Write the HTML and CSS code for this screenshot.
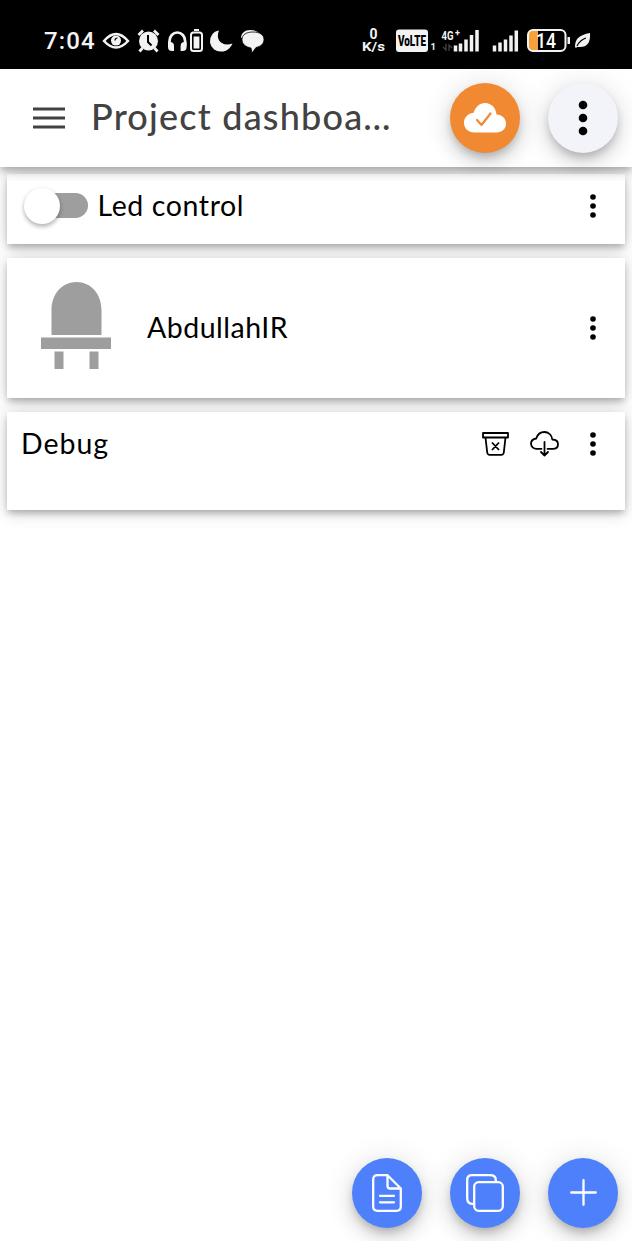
FILE: index.html
```
<!DOCTYPE html>
<html lang="en">
<head>
<meta charset="utf-8">
<title>Project dashboard</title>
<link rel="stylesheet" href="styles.css">
</head>
<body>
<div class="status">
  <span class="clock">7:04</span>
  <svg class="status-left" width="164" height="30" viewBox="102 26 164 30">
    <path d="M104 41Q116 27 128 41Q116 54 104 41Z" fill="none" stroke="#f3f3f3" stroke-width="2.5"/>
    <circle cx="116" cy="40.600" r="5" fill="#f3f3f3"/><path d="M115 40.500q0-2.500 2.500-2.500" fill="none" stroke="#000" stroke-width="1.200"/>
    <circle cx="148.500" cy="41" r="9.500" fill="#f3f3f3"/>
    <path d="M138.500 35l4.500-4.500M158.500 35l-4.500-4.500M142.500 48l-3 3.500M154.500 48l3 3.500" stroke="#f3f3f3" stroke-width="2.800"/>
    <path d="M148 35v7l3.500 3.500" fill="none" stroke="#000" stroke-width="2"/>
    <path d="M169.500 46v-5a7.800 8.500 0 0 1 15.600 0v5" fill="none" stroke="#f3f3f3" stroke-width="2.700"/>
    <path d="M168 42h2q4 0 4 4v5h-2q-4 0-4-4zM186.600 42h-2q-4 0-4 4v5h2q4 0 4-4z" fill="#f3f3f3"/>
    <rect x="191" y="32.500" width="11" height="18.500" rx="2.500" fill="none" stroke="#f3f3f3" stroke-width="2"/>
    <path d="M194 29h5v2h-5zM193.600 36.500h5.800v12h-5.800z" fill="#f3f3f3"/>
    <path d="M219 30.500C215 40 222 47 232.500 43.500C230 49 226 51.500 222 51.500A10.500 10.500 0 0 1 219 30.500Z" fill="#f3f3f3"/>
    <path d="M241 38c0-5 4-8 9-8 4 0 7 1 9 3z" fill="#f3f3f3"/>
    <path d="M253 32c7 0 11 3 11 7.500 0 4-3 7-8 8L252 53l-1-5c-5-1-9-3.500-9-8.500 0-4.500 4-7.500 11-7.500z" fill="#f3f3f3" stroke="#000" stroke-width=".8"/>
  </svg>
  <svg class="status-right" width="232" height="32" viewBox="360 25 232 32">
    <g class="status-text">
      <text x="369.500" y="39" font-size="14" textLength="8" lengthAdjust="spacingAndGlyphs">0</text>
      <text x="362" y="51" font-size="12" textLength="23" lengthAdjust="spacingAndGlyphs">K/s</text>
    </g>
    <rect x="396" y="29.500" width="32" height="22.500" rx="3" fill="#f3f3f3"/>
    <text class="volte" x="398" y="46" font-size="14" textLength="28" lengthAdjust="spacingAndGlyphs">VoLTE</text>
    <g class="status-text">
      <text x="430.500" y="50" font-size="9.500">1</text>
      <text x="441.500" y="40" font-size="13.500" textLength="12" lengthAdjust="spacingAndGlyphs">4G</text>
      <text x="455" y="35.500" font-size="9">+</text>
    </g>
    <path d="M446 44v6l-3-3M449 51v-6l3 3" fill="none" stroke="#444" stroke-width="1.300"/>
    <path d="M455.500 51.500v-6M460.500 51.500v-8M466 51.500v-12M471.500 51.500v-16.500M477 51.500v-21.500M494.500 51.500v-6M500 51.500v-9M505.500 51.500v-12M511 51.500v-16M516.300 51.500v-21" stroke="#f3f3f3" stroke-width="3.500"/>
    <path d="M538 30h-5q-5 0-5 5v11q0 5 5 5h5z" fill="#f5a13c"/>
    <rect x="528" y="30" width="37.500" height="21" rx="5" fill="none" stroke="#f3f3f3" stroke-width="2"/>
    <text class="battery" x="536" y="47.500" font-size="20" textLength="20" lengthAdjust="spacingAndGlyphs">14</text>
    <path d="M567.500 37h2.500v7h-2.500zM590 33q1 14-10 14h-3l-1 1-1-1c0-8 4-12 15-14z" fill="#f3f3f3"/>
    <path d="M577 46q3-6 9-8" fill="none" stroke="#000" stroke-width="1.300"/>
  </svg>
</div>

<header class="toolbar">
  <svg class="menu" width="32" height="22" viewBox="0 0 32 22"><path d="M0 2h32M0 11h32M0 20h32" stroke="#424242" stroke-width="3.200"/></svg>
  <h1 class="title">Project dashboa…</h1>
  <button class="fab orange" aria-label="Cloud status">
    <svg width="42" height="30" viewBox="0 0 42 30"><path d="M10.500 29.500C4 29.500 0 25 0 19.700C0 14.500 4 10.500 9.500 9.800C11.500 4 15.500 0 21 0C27.500 0 32 5 32.500 11.500C38 11.800 42 15.500 42 20.500C42 26 38 29.500 32.500 29.500Z" fill="#fff"/><path d="M13 17l4.500 5L26.500 10.500" fill="none" stroke="#f18832" stroke-width="2.200" stroke-linecap="round" stroke-linejoin="round"/></svg>
  </button>
  <button class="fab light" aria-label="More">
    <svg width="10" height="36" viewBox="0 0 10 36"><circle cx="5" cy="5" r="4.300"/><circle cx="5" cy="18" r="4.300"/><circle cx="5" cy="31" r="4.300"/></svg>
  </button>
</header>

<main class="cards">
  <section class="card control">
    <span class="toggle"><span class="knob"></span></span>
    <span class="label led-label">Led control</span>
    <svg class="dots" width="6" height="24" viewBox="0 0 6 24"><circle cx="3" cy="3" r="2.800"/><circle cx="3" cy="12" r="2.800"/><circle cx="3" cy="21" r="2.800"/></svg>
  </section>
  <section class="card lamp">
    <svg class="led" width="70" height="87" viewBox="0 0 70 87"><path d="M10.500 53V28C10.500 12 21 0 35.500 0S60.500 12 60.500 28V53ZM0 55.500H70V67H0ZM13.500 69.500H22.500V87H13.500ZM48.500 69.500H57.500V87H48.500Z" fill="#9e9e9e"/></svg>
    <span class="label name-label">AbdullahIR</span>
    <svg class="dots" width="6" height="24" viewBox="0 0 6 24"><circle cx="3" cy="3" r="2.800"/><circle cx="3" cy="12" r="2.800"/><circle cx="3" cy="21" r="2.800"/></svg>
  </section>
  <section class="card debug">
    <span class="label debug-label">Debug</span>
    <svg class="bin" width="27" height="24" viewBox="0 0 27 24" fill="none" stroke="#000" stroke-width="1.800" stroke-linejoin="round"><path d="M1 1h25v4.500H1zM3.500 5.500l1.700 15q.3 2.300 2.500 2.300h11.600q2.200 0 2.500-2.300l1.700-15M10 10.500l7 7.500M17 10.500L10 18"/></svg>
    <svg class="cloud" width="29" height="26" viewBox="0 0 29 26" fill="none" stroke="#000" stroke-width="1.800" stroke-linecap="round" stroke-linejoin="round"><path d="M11.500 17.800H6.500C3.500 17.800 1 15.500 1 12.800C1 9.800 3 8 6.200 7.500C7.500 3.500 10.500 1 14.300 1C18.500 1 21.800 4 22.300 8.500C25.800 8.700 28 10.500 28 13.200C28 16 26 17.800 22.800 17.800H17.500M14.500 11v13.500M11 21l3.500 3.500L18 21"/></svg>
    <svg class="dots" width="6" height="24" viewBox="0 0 6 24"><circle cx="3" cy="3" r="2.800"/><circle cx="3" cy="12" r="2.800"/><circle cx="3" cy="21" r="2.800"/></svg>
  </section>
</main>

<footer class="actions">
  <button class="fab blue" aria-label="Document">
    <svg width="30" height="38" viewBox="0 0 30 38" fill="none" stroke="#fff" stroke-width="2.300" stroke-linecap="round" stroke-linejoin="round"><path d="M15.500 1.200H5.500Q1.200 1.200 1.200 5.500V32.500Q1.200 36.800 5.500 36.800H24.500Q28.800 36.800 28.800 32.500V14.500ZM15.500 1.200V12Q15.500 14.500 18 14.500H28.800M8 21.800H22M8 28.300H22"/></svg>
  </button>
  <button class="fab blue" aria-label="Copy">
    <svg width="38" height="38" viewBox="0 0 38 38" fill="none" stroke="#fff" stroke-width="2.300"><rect x="8.200" y="8.200" width="28.600" height="28.600" rx="4.500"/><path d="M8.200 29.800H6Q1.200 29.800 1.200 24V6Q1.200 1.200 6 1.200H24Q29.800 1.200 29.800 6V8.200"/></svg>
  </button>
  <button class="fab blue" aria-label="Add">
    <svg width="27" height="27" viewBox="0 0 27 27" stroke="#fff" stroke-width="2.300" stroke-linecap="round"><path d="M13.500 1.200V25.800M1.200 13.500H25.800"/></svg>
  </button>
</footer>
</body>
</html>
```

FILE: styles.css
```
* { box-sizing: border-box; }
body {
  margin: 0;
  width: 632px;
  height: 1246px;
  display: flex;
  flex-direction: column;
  overflow: hidden;
  background: #fff;
  color: #000;
  font-family: Lato, sans-serif;
}
svg { display: block; flex: none; }
.status {
  flex: none;
  height: 69px;
  display: flex;
  align-items: center;
  padding: 13px 40px 0 44px;
  background: #000;
  color: #f3f3f3;
}
.clock {
  width: 58px;
  font: 500 24px/30px Roboto, sans-serif;
  letter-spacing: 1.1px;
  white-space: nowrap;
}
.status-right { margin-left: auto; }
.status-text { fill: #f3f3f3; font-family: Roboto, sans-serif; font-weight: 700; }
.volte { fill: #000; font-family: Roboto, sans-serif; font-weight: 900; }
.battery { fill: #fff; font-family: Roboto, sans-serif; font-weight: 500; }
.toolbar {
  position: relative;
  z-index: 1;
  flex: none;
  height: 98px;
  display: flex;
  align-items: center;
  padding: 0 14px 0 33px;
  background: #fff;
  box-shadow: 0 4px 7px rgba(0,0,0,.26), 0 2px 20px rgba(0,0,0,.14);
  clip-path: inset(0 0 -14px 0);
}
.title {
  width: 325px;
  margin: 0 0 4px 26px;
  font-size: 36px;
  line-height: 48px;
  font-weight: 500;
  letter-spacing: 1.2px;
  color: #424242;
  white-space: nowrap;
}
.fab {
  flex: none;
  width: 70px;
  height: 70px;
  padding: 0;
  border: 0;
  border-radius: 50%;
  display: flex;
  align-items: center;
  justify-content: center;
  box-shadow: 0 5px 9px -2px rgba(0,0,0,.2), 0 10px 17px rgba(0,0,0,.12), 0 2px 31px rgba(0,0,0,.12);
}
.orange { background: #f18832; margin-right: 28px; }
.title + .orange { margin-left: auto; }
.light { background: #f3f4f9; }
.blue { background: #4d80fa; }
.cards {
  flex: 1;
  display: flex;
  flex-direction: column;
  gap: 14px;
  padding: 7px;
}
.card {
  flex: none;
  display: flex;
  background: #fff;
  box-shadow: 0 4px 7px -1px rgba(0,0,0,.28), 0 2px 18px rgba(0,0,0,.16);
}
.label { font-size: 28.5px; line-height: 36px; padding-bottom: 2px; white-space: nowrap; }
.dots { margin-left: auto; }
.control { height: 70px; padding: 0 29px 7px 17px; align-items: center; }
.toggle {
  width: 64px;
  height: 36px;
  display: flex;
  align-items: center;
}
.toggle::after {
  content: "";
  flex: none;
  width: 45px;
  height: 25px;
  margin-left: -17px;
  background: #9e9e9e;
  border-radius: 13px;
}
.knob {
  position: relative;
  z-index: 1;
  flex: none;
  width: 36px;
  height: 36px;
  border-radius: 50%;
  background: #fff;
  box-shadow: 0 3px 4px rgba(0,0,0,.22), 0 1px 5px rgba(0,0,0,.12);
}
.led-label { margin-left: 9.5px; letter-spacing: .6px; }
.lamp { height: 140px; padding: 0 29px 0 34px; align-items: center; }
.led { margin-top: -5px; }
.name-label { margin-left: 36px; letter-spacing: .5px; }
.debug { height: 98px; padding: 0 29px 35px 14px; align-items: center; }
.debug-label { letter-spacing: 1px; }
.bin { margin-left: auto; }
.cloud { margin-left: 21px; }
.cloud + .dots { margin-left: 31px; }
.actions {
  flex: none;
  height: 126px;
  margin-bottom: 5px;
  display: flex;
  justify-content: flex-end;
  align-items: flex-end;
  gap: 28px;
  padding: 0 14px 13.5px 0;
  overflow: hidden;
}
```
